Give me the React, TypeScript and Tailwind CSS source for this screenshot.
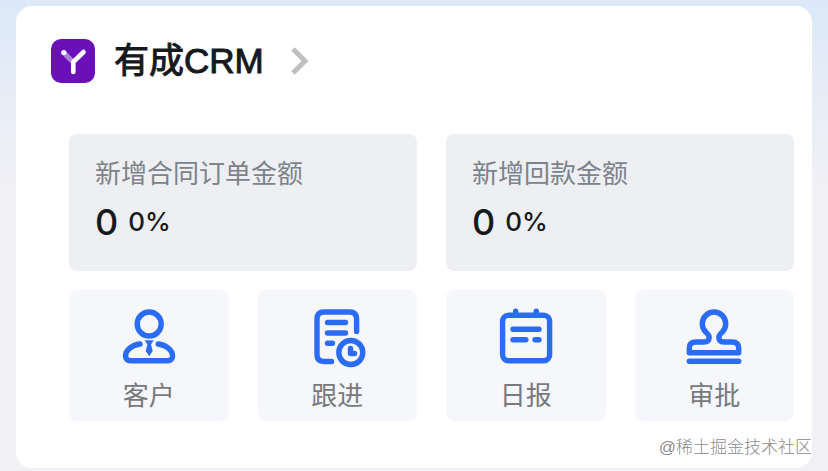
import type { ReactNode } from "react"

type StatCardProps = {
  label: string
  value: string
  rate: string
}

type EntryProps = {
  label: string
  icon: ReactNode
}

const iconProps = {
  className: "size-[60px] overflow-visible",
  viewBox: "0 0 60 60",
  fill: "none",
  stroke: "currentColor",
  strokeWidth: 5.4,
  strokeLinecap: "round" as const,
  strokeLinejoin: "round" as const,
  "aria-hidden": true,
}

const CustomerIcon = () => (
  <svg {...iconProps}>
    <circle cx="30.2" cy="18" r="12" />
    <path d="M21 38 C13 39 6.500 44 6.500 50 C6.500 53 8.500 54.800 11.500 54.800 H48.500 C51.500 54.800 53.600 53 53.600 50 C53.600 44 47 39 39.200 38" />
    <path
      d="M25.700 34.300 H34.700 L32 38.500 L33.700 45 L30.200 50.200 L26.700 45 L28.400 38.500 Z"
      fill="currentColor"
      stroke="none"
    />
  </svg>
)

const FollowUpIcon = () => (
  <svg {...iconProps}>
    <path d="M49.600 25.500 V13 Q49.600 6 42.600 6 H17 Q10 6 10 13 V48.500 Q10 55.500 17 55.500 H24.500" />
    <path d="M20.500 16.500 H38.500 M20.500 27 H38.500 M20.500 37.300 H25.500" />
    <circle cx="43.8" cy="46.5" r="12" />
    <path d="M43.500 42.500 V47.500 H47.500" />
  </svg>
)

const DailyIcon = () => (
  <svg {...iconProps}>
    <rect x="6.6" y="9.2" width="47" height="45.600" rx="6" />
    <path d="M19.700 5.200 V9 M40.300 5.200 V9 M17 23.300 H43 M17 33.700 H29.800 M39 33.700 H43" />
  </svg>
)

const ApprovalIcon = () => (
  <svg {...iconProps}>
    <path d="M21.700 26 A11.700 11.700 0 1 1 38.300 26 C36 28 34.800 29.500 34.800 31.500 Q35 36 40 36 H48 Q54.700 36 54.700 42 V46.800 H5.300 V42 Q5.300 36 12 36 H20 Q25 36 25.200 31.500 C25.200 29.500 24 28 21.700 26 Z" />
    <path d="M5.300 55.300 H54.700" />
  </svg>
)

const entries: EntryProps[] = [
  { label: "客户", icon: <CustomerIcon /> },
  { label: "跟进", icon: <FollowUpIcon /> },
  { label: "日报", icon: <DailyIcon /> },
  { label: "审批", icon: <ApprovalIcon /> },
]

const Logo = () => (
  <svg className="size-11 shrink-0" viewBox="0 0 44 44" fill="none" aria-hidden="true">
    <rect width="44" height="44" rx="10" fill="#6a10b8" />
    <path d="M13 14 L21.500 22.500" stroke="#b184dc" strokeWidth="5" strokeLinecap="round" />
    <path d="M32.500 13 L22.300 23 V33" stroke="#fff" strokeWidth="4.600" strokeLinecap="round" strokeLinejoin="round" />
    <circle cx="12.800" cy="13.500" r="2.600" fill="#fff" />
  </svg>
)

const StatCard = ({ label, value, rate }: StatCardProps) => {
  return (
    <div className="rounded-lg bg-[#eeeff3] px-[26px] pt-[21px] pb-7">
      <dt className="text-[26px] leading-[38px] text-[#7d838a]">{label}</dt>
      <dd className="mt-2 flex items-center gap-2.5 font-['Inter','Noto_Sans_CJK_SC',sans-serif] font-medium leading-[42px] text-[#171a1d]">
        <span className="text-[36px]">{value}</span>
        <span className="text-[26px]">{rate}</span>
      </dd>
    </div>
  )
}

const Entry = ({ label, icon }: EntryProps) => {
  return (
    <button
      type="button"
      className="flex cursor-pointer flex-col items-center rounded-lg bg-[#f5f7fb] pt-4 pb-1.5 text-[#2b6cf6]"
    >
      {icon}
      <span className="mt-[11px] text-[26px] leading-[38px] text-[#77797c]">{label}</span>
    </button>
  )
}

const App = () => {
  return (
    <div className="min-h-screen bg-[#f0f0f5] bg-linear-to-b from-[#dce9f8] to-[#f0f0f5] to-[180px] px-4 pt-1.5 pb-[3px] font-['Liberation_Sans','Noto_Sans_CJK_SC',sans-serif]">
      <main className="relative rounded-[16px] bg-white pt-[30px] pr-[18px] pb-[47px] pl-[35px]">
        <h1>
          <a href="#crm" className="flex h-[50px] items-center text-[#171a1d]">
            <Logo />
            <span className="ml-[19px] text-[35px] leading-[52px] [-webkit-text-stroke:1px_currentColor]">有成CRM</span>
            <svg className="ml-6 h-8 w-6" viewBox="0 0 24 32" fill="none" stroke="#bfc0c2" strokeWidth="5" aria-hidden="true">
              <path d="M5 4 L17 16 L5 28" />
            </svg>
          </a>
        </h1>

        <div className="mt-12 ml-[18px]">
          <dl className="grid grid-cols-2 gap-[29px]">
            <StatCard label="新增合同订单金额" value="0" rate="0%" />
            <StatCard label="新增回款金额" value="0" rate="0%" />
          </dl>
          <div className="mt-[19px] grid grid-cols-4 gap-[29px]">
            {entries.map((entry) => (
              <Entry key={entry.label} {...entry} />
            ))}
          </div>
        </div>

        <p className="absolute right-0 bottom-2 text-[17px] leading-6 font-light text-[#8c8c8c] [text-shadow:-1px_-1px_0_#fff]">
          @稀土掘金技术社区
        </p>
      </main>
    </div>
  )
}

export default App
